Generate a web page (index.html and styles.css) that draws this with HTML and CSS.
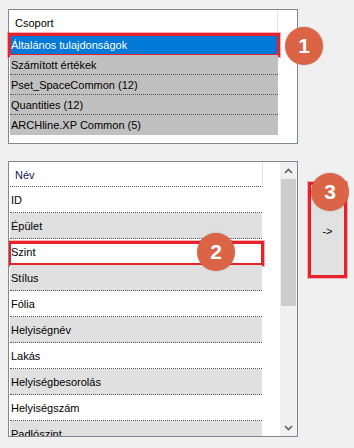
FILE: index.html
```html
<!DOCTYPE html>
<html lang="hu">
<head>
<meta charset="UTF-8">
<meta name="viewport" content="width=device-width, initial-scale=1.0">
<title>Tulajdonságok</title>
<link rel="stylesheet" href="styles.css">
</head>
<body>
<div class="group-panel">
    <div class="group-header"><span>Csoport</span></div>
    <div class="group-row selected marked">Általános tulajdonságok
        <span class="badge badge-1">1</span>
    </div>
    <div class="group-row">Számított értékek</div>
    <div class="group-row">Pset_SpaceCommon (12)</div>
    <div class="group-row">Quantities (12)</div>
    <div class="group-row">ARCHline.XP Common (5)</div>
</div>

<div class="lower">
    <div class="prop-panel">
        <div class="prop-list">
            <div class="prop-header"><span>Név</span></div>
            <div class="prop-row">ID</div>
            <div class="prop-row alt">Épület</div>
            <div class="prop-row marked">Szint
                <span class="badge badge-2">2</span>
            </div>
            <div class="prop-row alt">Stílus</div>
            <div class="prop-row">Fólia</div>
            <div class="prop-row alt">Helyiségnév</div>
            <div class="prop-row">Lakás</div>
            <div class="prop-row alt">Helyiségbesorolás</div>
            <div class="prop-row">Helyiségszám</div>
            <div class="prop-row alt">Padlószint</div>
        </div>
        <div class="scrollbar">
            <div class="arrow">
                <svg width="9" height="6" viewBox="0 0 9 6"><path d="M1 5 L4.5 1.5 L8 5" fill="none" stroke="#606060" stroke-width="1.6"/></svg>
            </div>
            <div class="thumb"></div>
            <div class="track"></div>
            <div class="arrow">
                <svg width="9" height="6" viewBox="0 0 9 6"><path d="M1 1 L4.5 4.5 L8 1" fill="none" stroke="#606060" stroke-width="1.6"/></svg>
            </div>
        </div>
    </div>
    <div class="add-btn">-&gt;
        <span class="badge badge-3">3</span>
    </div>
</div>
</body>
</html>
```

FILE: styles.css
```css
body {
    margin: 0;
    padding: 9px 0 0 8px;
    background-color: #f0f0f0;
    font-family: "Liberation Sans", Arial, sans-serif;
    font-size: 11px;
    color: #000;
}
.group-panel {
    width: 290px;
    height: 135px;
    box-sizing: border-box;
    border: 1px solid #828790;
    background-color: #fff;
    padding-left: 1px;
}
.group-header {
    width: 268px;
    height: 25px;
    border-right: 1px solid #e5e5e5;
    display: flex;
    align-items: center;
    padding-left: 5px;
    box-sizing: border-box;
}
.group-row {
    width: 268px;
    height: 20px;
    box-sizing: border-box;
    background-color: #c0c0c0;
    border-bottom: 1px dotted #555;
    display: flex;
    align-items: center;
    padding-left: 1px;
    position: relative;
}
.group-row:last-child {
    border-bottom: none;
}
.group-row.selected {
    background-color: #0078d7;
    color: #fff;
    border-bottom-color: #fff;
}
.marked {
    outline: 3px solid #e8222c;
    outline-offset: -1px;
    box-shadow: 0 0 0 3px rgba(232, 34, 44, 0.35);
}
.lower {
    display: flex;
    align-items: flex-start;
    margin-top: 17px;
}
.prop-panel {
    width: 290px;
    height: 276px;
    box-sizing: border-box;
    border: 1px solid #828790;
    background-color: #fff;
    display: flex;
}
.prop-list {
    flex: 1;
    overflow: hidden;
    padding-left: 1px;
}
.prop-header {
    width: 253px;
    height: 25px;
    box-sizing: border-box;
    border-right: 1px solid #e5e5e5;
    border-bottom: 1px dotted #555;
    display: flex;
    align-items: center;
    padding-left: 5px;
    color: #141450;
}
.prop-header span {
    margin-top: 1px;
}
.prop-row {
    width: 252px;
    height: 26px;
    box-sizing: border-box;
    border-bottom: 1px dotted #555;
    display: flex;
    align-items: center;
    padding-left: 1px;
    position: relative;
}
.prop-row.alt {
    background-color: #e0e0e0;
}
.prop-row.marked {
    outline: none;
    box-shadow: none;
}
.prop-row.marked::after {
    content: "";
    position: absolute;
    left: -2px;
    right: -2px;
    top: 2px;
    bottom: -2px;
    border: 3px solid #e8222c;
    box-shadow: 0 0 0 1px rgba(232, 34, 44, 0.35);
}
.scrollbar {
    width: 17px;
    background-color: #f0f0f0;
    display: flex;
    flex-direction: column;
}
.arrow {
    height: 17px;
    display: flex;
    align-items: center;
    justify-content: center;
}
.thumb {
    height: 127px;
    margin: 0 1px;
    background-color: #cdcdcd;
}
.track {
    flex: 1;
}
.add-btn {
    width: 35px;
    height: 92px;
    box-sizing: border-box;
    margin: 23px 0 0 12px;
    background-color: #e1e1e1;
    outline: 3px solid #e8222c;
    outline-offset: -1px;
    box-shadow: 0 0 0 3px rgba(232, 34, 44, 0.3);
    display: flex;
    align-items: center;
    justify-content: center;
    font-size: 11px;
    position: relative;
    padding-top: 2px;
}
.badge {
    position: absolute;
    width: 38px;
    height: 38px;
    border-radius: 50%;
    background-color: #db6446;
    color: #fff;
    font-family: "Liberation Sans", Arial, sans-serif;
    font-weight: bold;
    font-size: 21px;
    display: flex;
    align-items: center;
    justify-content: center;
    box-shadow: 0 0 2px rgba(0, 0, 0, 0.25);
    z-index: 2;
}
.badge-1 {
    left: 275px;
    top: -8px;
}
.badge-2 {
    left: 187px;
    top: -6px;
}
.badge-3 {
    left: 1px;
    top: -11px;
}
```
